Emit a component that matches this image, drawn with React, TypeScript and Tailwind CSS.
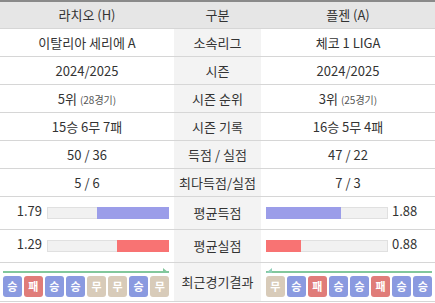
const FONT = { fontFamily: '"Noto Sans CJK KR", "Noto Sans", sans-serif' };

type Row = { home: React.ReactNode; label: string; away: React.ReactNode };

const rows: Row[] = [
  { home: "이탈리아 세리에 A", label: "소속리그", away: "체코 1 LIGA" },
  { home: "2024/2025", label: "시즌", away: "2024/2025" },
  {
    home: (
      <span>
        5위 <span className="text-[10px] text-[#555]">(28경기)</span>
      </span>
    ),
    label: "시즌 순위",
    away: (
      <span>
        3위 <span className="text-[10px] text-[#555]">(25경기)</span>
      </span>
    ),
  },
  { home: "15승 6무 7패", label: "시즌 기록", away: "16승 5무 4패" },
  { home: "50 / 36", label: "득점 / 실점", away: "47 / 22" },
  { home: "5 / 6", label: "최다득점/실점", away: "7 / 3" },
];

const homeForm = ["승", "패", "승", "승", "무", "무", "승", "무"];
const awayForm = ["무", "승", "패", "승", "승", "패", "승", "승"];

function badgeClass(r: string) {
  if (r === "승") return "bg-[#8a9ae0]";
  if (r === "패") return "bg-[#e07c79]";
  return "bg-[#d8cbb9]";
}

function Bar({ value, color, side }: { value: number; color: string; side: "home" | "away" }) {
  const w = (value / 3) * 100;
  return (
    <div className="relative h-[12px] w-[122px] border border-[#e0e0e0] bg-[#f1f1f1]">
      <div
        className={`absolute top-[-1px] bottom-[-1px] ${side === "home" ? "right-[-1px]" : "left-[-1px]"} ${color}`}
        style={{ width: `${w}%` }}
      />
    </div>
  );
}

function FormLine({ side }: { side: "home" | "away" }) {
  return (
    <svg width="166" height="6" viewBox="0 0 166 6" className="block">
      <rect x="0" y="4" width="166" height="2" fill="#82c79c" />
      {side === "home" ? (
        <polygon points="160,1 166,6 160,6" fill="#82c79c" />
      ) : (
        <polygon points="6,1 0,6 6,6" fill="#8fd0b8" />
      )}
    </svg>
  );
}

function Form({ list, side }: { list: string[]; side: "home" | "away" }) {
  return (
    <div className="flex w-[166px] flex-col gap-[3px]">
      <FormLine side={side} />
      <div className="flex gap-[2.5px]">
        {list.map((r, i) => (
          <div
            key={i}
            className={`flex h-[21px] flex-1 items-center justify-center rounded-[3px] text-[11px] font-bold text-white ${badgeClass(r)}`}
          >
            {r}
          </div>
        ))}
      </div>
    </div>
  );
}

export default function App() {
  return (
    <div className="w-[435px] text-[13px] text-[#333]" style={FONT}>
      <div className="grid h-[29px] grid-cols-[174px_87px_174px] border-t-2 border-b border-t-[#8a8a8a] border-b-[#d6d6d6] bg-[#e6e6e6]">
        <div className="flex items-center justify-center">라치오 (H)</div>
        <div className="flex items-center justify-center">구분</div>
        <div className="flex items-center justify-center">플젠 (A)</div>
      </div>

      {rows.map((r) => (
        <div key={r.label} className="grid h-[28px] grid-cols-[174px_87px_174px] border-b border-[#d6d6d6]">
          <div className="flex items-center justify-center">{r.home}</div>
          <div className="flex items-center justify-center bg-[#f3f3f3]">{r.label}</div>
          <div className="flex items-center justify-center">{r.away}</div>
        </div>
      ))}

      <div className="grid h-[33px] grid-cols-[174px_87px_174px] border-b border-[#d6d6d6]">
        <div className="flex items-center justify-end gap-[5px] pr-[5px]">
          <span className="mt-[-4px]">1.79</span>
          <Bar value={1.79} color="bg-[#9b9de9]" side="home" />
        </div>
        <div className="flex items-center justify-center bg-[#f3f3f3]">평균득점</div>
        <div className="flex items-center gap-[4px] pl-[5px]">
          <Bar value={1.88} color="bg-[#9b9de9]" side="away" />
          <span className="mt-[-4px]">1.88</span>
        </div>
      </div>

      <div className="grid h-[33px] grid-cols-[174px_87px_174px] border-b border-[#d6d6d6]">
        <div className="flex items-center justify-end gap-[5px] pr-[5px]">
          <span className="mt-[-4px]">1.29</span>
          <Bar value={1.29} color="bg-[#f87373]" side="home" />
        </div>
        <div className="flex items-center justify-center bg-[#f3f3f3]">평균실점</div>
        <div className="flex items-center gap-[4px] pl-[5px]">
          <Bar value={0.88} color="bg-[#f87373]" side="away" />
          <span className="mt-[-4px]">0.88</span>
        </div>
      </div>

      <div className="grid h-[39px] grid-cols-[174px_87px_174px] border-b border-[#d6d6d6]">
        <div className="flex items-center pl-[3px]">
          <Form list={homeForm} side="home" />
        </div>
        <div className="flex items-center justify-center bg-[#f3f3f3]">최근경기결과</div>
        <div className="flex items-center pl-[5px]">
          <Form list={awayForm} side="away" />
        </div>
      </div>
    </div>
  );
}
